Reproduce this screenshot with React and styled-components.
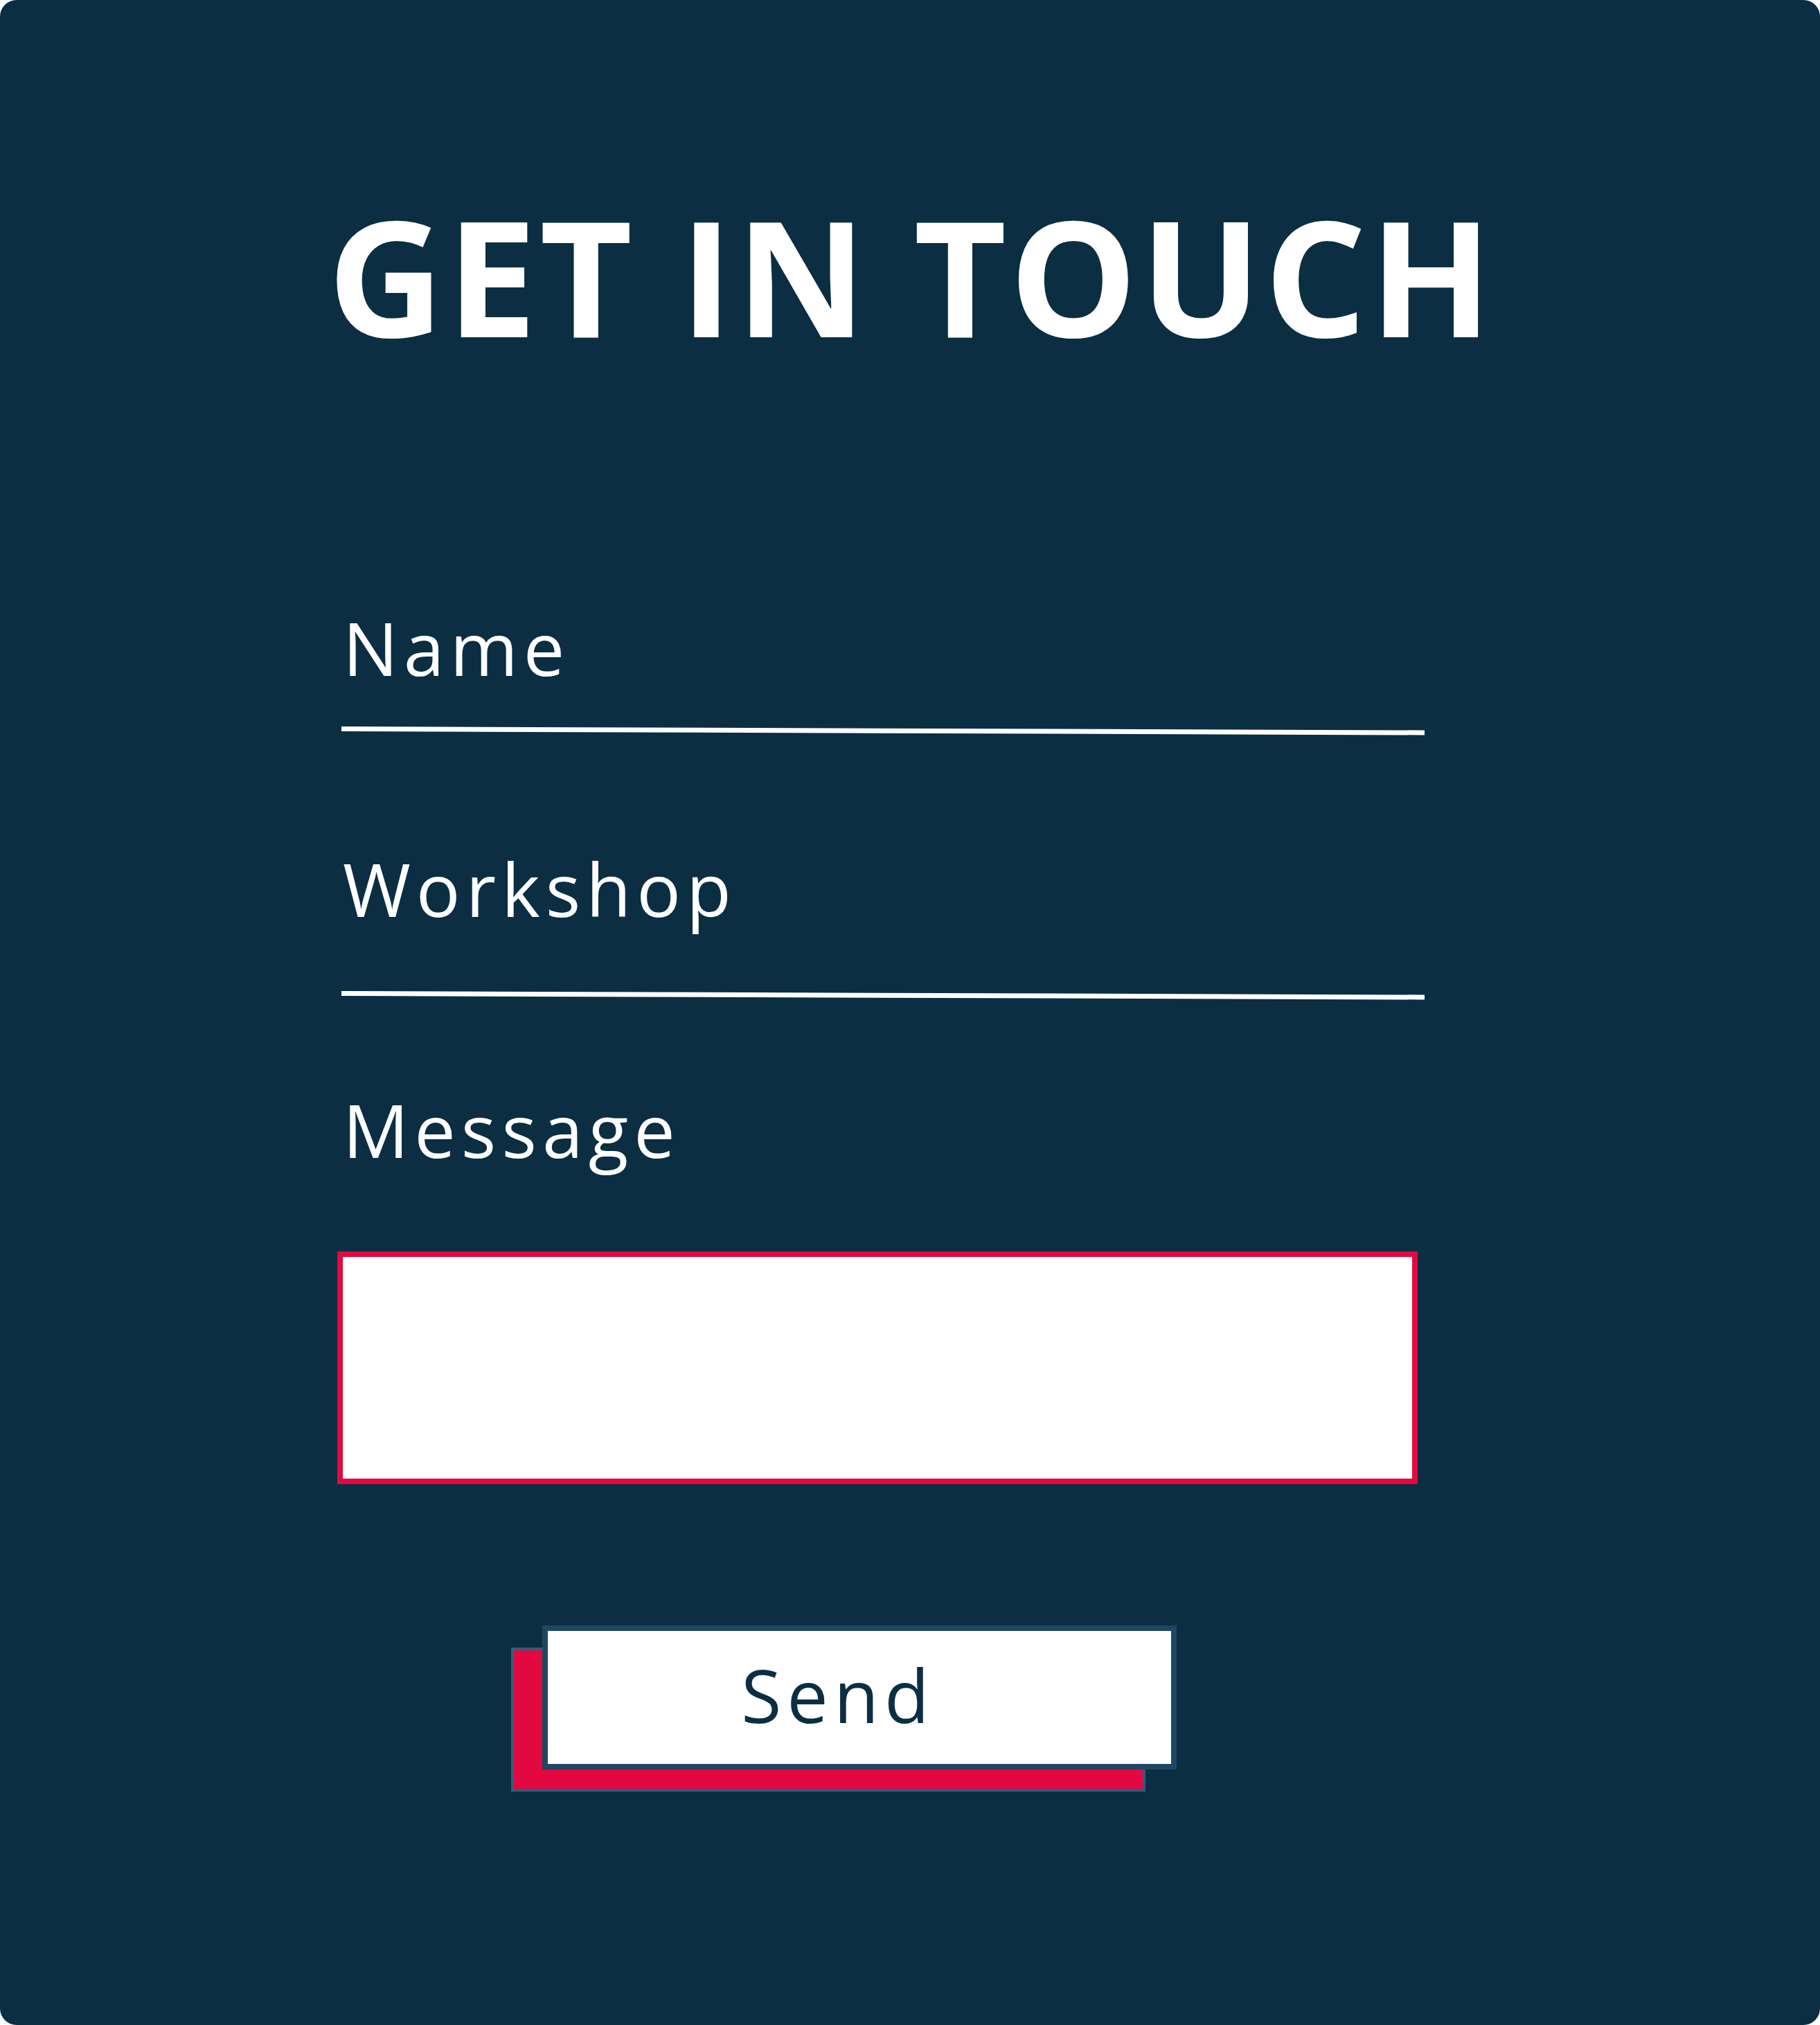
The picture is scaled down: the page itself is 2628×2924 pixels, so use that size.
import React from 'react'
import styled, { createGlobalStyle } from 'styled-components'

const GlobalStyle = createGlobalStyle`
  html, body {
    margin: 0;
    padding: 0;
    background: #ffffff;
  }
  * { box-sizing: border-box; }
`

const Card = styled.section`
  width: 2628px;
  height: 2924px;
  background-color: #0b2e43;
  border-radius: 24px;
  padding: 281px 0 0 0;
  display: flex;
  flex-direction: column;
  font-family: "Open Sans", "Noto Sans", sans-serif;
  color: #ffffff;
`

const Title = styled.h1`
  margin: 0;
  text-align: center;
  font-size: 232px;
  line-height: 1;
  font-weight: 700;
  letter-spacing: 4px;
  padding-left: 4px;
`

const Form = styled.form`
  width: 1566px;
  margin: 0 0 0 490px;
  padding-top: 369px;
  display: flex;
  flex-direction: column;
`

const Field = styled.div`
  display: flex;
  flex-direction: column;
  margin-top: ${props => props.$gap || 0}px;
`

const Label = styled.label`
  font-size: 106px;
  line-height: 1;
  letter-spacing: 8px;
  margin-left: 5px;
`

const LineInput = styled.input`
  display: block;
  width: 1564px;
  margin-left: 3px;
  height: ${props => props.$h}px;
  border: none;
  border-bottom: 7px solid #ffffff;
  background: transparent;
  outline: none;
  transform: rotate(0.2deg);
  transform-origin: left bottom;
`

const MessageBox = styled.textarea`
  display: block;
  width: 1560px;
  height: 336px;
  margin: 123px 0 0 -3px;
  border: 8px solid #e30940;
  background: #ffffff;
  resize: none;
  outline: none;
`

const ButtonRow = styled.div`
  display: flex;
  margin-top: 204px;
  padding-left: 293px;
`

const SendWrap = styled.div`
  position: relative;
  width: 916px;
  height: 208px;

  &::before {
    content: "";
    position: absolute;
    left: -45px;
    top: 32px;
    width: 916px;
    height: 208px;
    box-sizing: border-box;
    background: #e30940;
    border: 4px solid #2a5f80;
  }
`

const SendButton = styled.button`
  position: relative;
  width: 100%;
  height: 100%;
  background: #ffffff;
  border: 8px solid #1f4762;
  color: #0b2e43;
  font-family: "Open Sans", "Noto Sans", sans-serif;
  font-size: 106px;
  line-height: 1;
  letter-spacing: 8px;
  padding: 0 62px 8px 0;
  cursor: pointer;
`

const App = () => {
  return (
    <>
      <GlobalStyle />
      <Card>
        <Title>GET IN TOUCH</Title>
        <Form onSubmit={e => e.preventDefault()}>
          <Field>
            <Label htmlFor="name">Name</Label>
            <LineInput id="name" type="text" $h={68} />
          </Field>
          <Field $gap={174}>
            <Label htmlFor="workshop">Workshop</Label>
            <LineInput id="workshop" type="text" $h={102} />
          </Field>
          <Field $gap={140}>
            <Label htmlFor="message">Message</Label>
            <MessageBox id="message" />
          </Field>
          <ButtonRow>
            <SendWrap>
              <SendButton type="submit">Send</SendButton>
            </SendWrap>
          </ButtonRow>
        </Form>
      </Card>
    </>
  )
}

export default App
